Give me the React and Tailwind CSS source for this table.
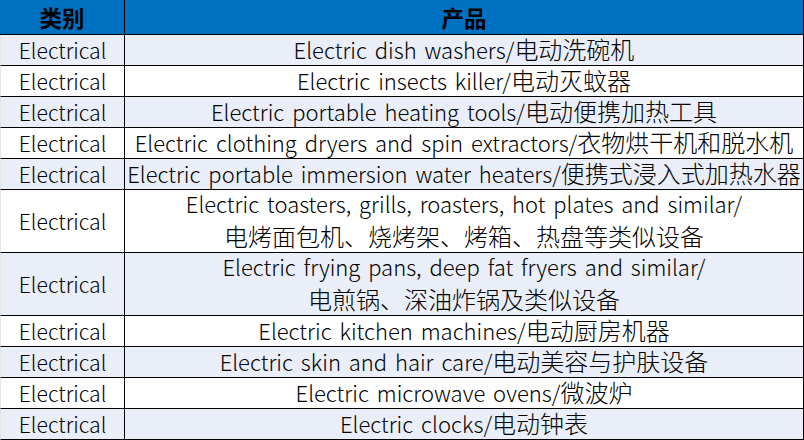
import React from 'react';

const ROWS = [
  { cat: 'Electrical', lines: ['Electric dish washers/电动洗碗机'] },
  { cat: 'Electrical', lines: ['Electric insects killer/电动灭蚊器'] },
  { cat: 'Electrical', lines: ['Electric portable heating tools/电动便携加热工具'] },
  { cat: 'Electrical', lines: ['Electric clothing dryers and spin extractors/衣物烘干机和脱水机'] },
  { cat: 'Electrical', lines: ['Electric portable immersion water heaters/便携式浸入式加热水器'] },
  {
    cat: 'Electrical',
    lines: ['Electric toasters, grills, roasters, hot plates and similar/', '电烤面包机、烧烤架、烤箱、热盘等类似设备'],
  },
  {
    cat: 'Electrical',
    lines: ['Electric frying pans, deep fat fryers and similar/', '电煎锅、深油炸锅及类似设备'],
  },
  { cat: 'Electrical', lines: ['Electric kitchen machines/电动厨房机器'] },
  { cat: 'Electrical', lines: ['Electric skin and hair care/电动美容与护肤设备'] },
  { cat: 'Electrical', lines: ['Electric microwave ovens/微波炉'] },
  { cat: 'Electrical', lines: ['Electric clocks/电动钟表'] },
];

const font = { fontFamily: '"Noto Sans CJK SC", "Noto Sans", sans-serif' };

// latin and cjk runs get slightly different sizes to match the sheet's font metrics
function Line({ text }) {
  const parts = text.split(/([\u3000-\u303f\u4e00-\u9fff]+)/).filter(Boolean);
  return (
    <div className="leading-[30px]">
      {parts.map((p, k) =>
        /[\u3000-\u303f\u4e00-\u9fff]/.test(p) ? (
          <span key={k} className="text-[24px]">{p}</span>
        ) : (
          <span key={k} className="text-[22px] [word-spacing:3px]">{p}</span>
        )
      )}
    </div>
  );
}

export default function App() {
  return (
    <div className="w-[804px] h-[440px] overflow-hidden bg-white text-black" style={font}>
      <div className="flex h-[35px] bg-[#0070c0] border-b border-black">
        <div className="w-[125px] border-r border-black flex items-center justify-center text-[22.5px] font-bold leading-none">
          类别
        </div>
        <div className="flex-1 border-r border-black flex items-center justify-center text-[22.5px] font-bold leading-none">
          产品
        </div>
      </div>
      {ROWS.map((row, i) => {
        const tall = row.lines.length > 1;
        return (
          <div
            key={i}
            className={
              'flex font-light border-b border-black border-l border-l-[#e4e4e4] ' +
              (tall ? 'h-[63px] ' : 'h-[31px] ') +
              (i % 2 === 0 ? 'bg-[#e9eef8]' : 'bg-white')
            }
          >
            <div className="w-[124px] border-r border-black flex items-center justify-center text-[21.2px] leading-none">
              {row.cat}
            </div>
            <div className="flex-1 border-r border-black flex flex-col items-center justify-center whitespace-nowrap">
              {row.lines.map((l, j) => (
                <Line key={j} text={l} />
              ))}
            </div>
          </div>
        );
      })}
    </div>
  );
}
